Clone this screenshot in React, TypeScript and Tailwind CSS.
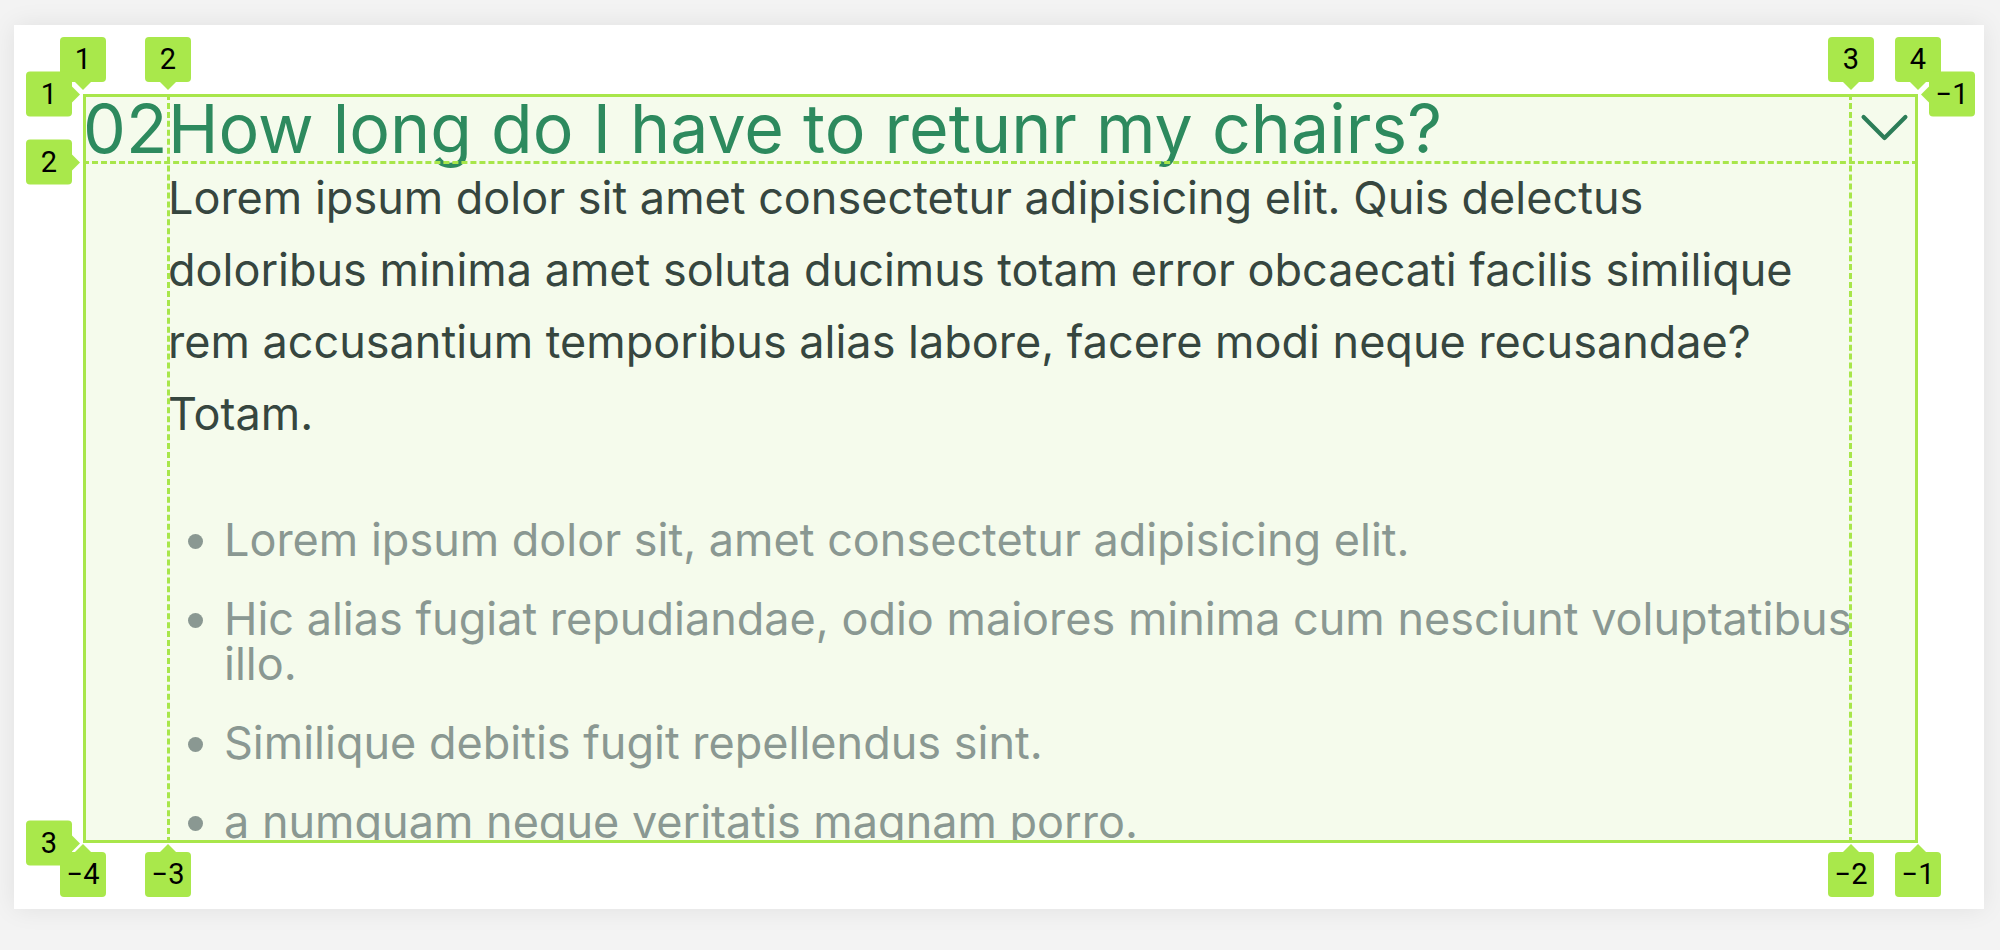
import React from 'react';

type Side = 'top' | 'bottom' | 'left' | 'right';

// grid-line number badge, like the devtools overlay
function LineLabel({ text, side }: { text: string; side: Side }) {
  return (
    <div className="relative flex h-[45px] w-[46px] items-center justify-center rounded-[4px] bg-[#a9e84b] text-[29px] leading-none text-black"
      style={{ fontFamily: 'Roboto, "Liberation Sans", sans-serif' }}>
      {text}
      {side === 'top' && (
        <span className="absolute -bottom-[8px] left-1/2 -translate-x-1/2 border-x-[8px] border-t-[8px] border-x-transparent border-t-[#a9e84b]" />
      )}
      {side === 'bottom' && (
        <span className="absolute -top-[8px] left-1/2 -translate-x-1/2 border-x-[8px] border-b-[8px] border-x-transparent border-b-[#a9e84b]" />
      )}
      {side === 'left' && (
        <span className="absolute -right-[8px] top-1/2 -translate-y-1/2 border-y-[8px] border-l-[8px] border-y-transparent border-l-[#a9e84b]" />
      )}
      {side === 'right' && (
        <span className="absolute -left-[8px] top-1/2 -translate-y-1/2 border-y-[8px] border-r-[8px] border-y-transparent border-r-[#a9e84b]" />
      )}
    </div>
  );
}

const items = [
  'Lorem ipsum dolor sit, amet consectetur adipisicing elit.',
  'Hic alias fugiat repudiandae, odio maiores minima cum nesciunt voluptatibus illo.',
  'Similique debitis fugit repellendus sint.',
  'a numquam neque veritatis magnam porro.',
];

export default function App() {
  return (
    <div className="min-h-[950px] w-full bg-[#f3f3f3] pt-[25px] pl-[14px]" style={{ fontFamily: 'Inter, "Noto Sans", sans-serif' }}>
      <div className="w-[1970px] h-[884px] bg-white pl-[69px] pr-[66px] pt-[69px] shadow-[0_0_24px_rgba(0,0,0,0.08)]">
        <div className="relative grid h-[749px] grid-cols-[85px_1fr_67px] grid-rows-[68px_1fr] bg-[#f5fbec]">
          <p className="text-[68px] leading-none text-[#2d8a5e] whitespace-nowrap">02</p>
          <p className="text-[68px] leading-none text-[#2d8a5e] whitespace-nowrap">How long do I have to retunr my chairs?</p>
          <svg viewBox="0 0 24 24" fill="none" stroke="#2c7d58" strokeWidth={1.5} className="h-[67px] w-[67px]">
            <path strokeLinecap="round" strokeLinejoin="round" d="m19.5 8.25-7.5 7.5-7.5-7.5" />
          </svg>

          <div className="col-start-2 min-h-0 overflow-hidden">
            <p className="text-[45px] leading-[72px] text-[#36463f]">
              Lorem ipsum dolor sit amet consectetur adipisicing elit. Quis delectus doloribus minima amet soluta ducimus totam error obcaecati facilis similique rem accusantium temporibus alias labore, facere modi neque recusandae? Totam.
            </p>
            <ul className="mt-[67px] -mr-[14px] list-disc pl-[56px] flex flex-col gap-[34px] text-[45px] leading-[45px] text-[#8a9892] marker:text-[#8a9892]">
              {items.map((t) => (
                <li key={t}>{t}</li>
              ))}
            </ul>
          </div>

          {/* grid overlay lines */}
          <div className="pointer-events-none absolute inset-0 z-10 border-[3px] border-[#a8e64a]" />
          <div className="pointer-events-none absolute top-0 bottom-0 left-[84px] z-10 border-l-[3px] border-dashed border-[#a8e64a]" />
          <div className="pointer-events-none absolute top-0 bottom-0 right-[66px] z-10 border-l-[3px] border-dashed border-[#a8e64a]" />
          <div className="pointer-events-none absolute top-[67px] left-0 right-0 z-10 border-t-[3px] border-dashed border-[#a8e64a]" />

          {/* column numbers, top and bottom */}
          <div className="absolute -top-[57px] left-0 right-0 z-20 grid grid-cols-[85px_1fr_67px_0px]">
            {['1', '2', '3', '4'].map((n) => (
              <div key={n} className="-translate-x-1/2 w-fit"><LineLabel text={n} side="top" /></div>
            ))}
          </div>
          <div className="absolute -bottom-[54px] left-0 right-0 z-20 grid grid-cols-[85px_1fr_67px_0px]">
            {['−4', '−3', '−2', '−1'].map((n) => (
              <div key={n} className="-translate-x-1/2 w-fit"><LineLabel text={n} side="bottom" /></div>
            ))}
          </div>

          {/* row numbers */}
          <div className="absolute top-0 bottom-0 -left-[57px] z-30 grid grid-rows-[68px_1fr_0px]">
            {['1', '2', '3'].map((n) => (
              <div key={n} className="-translate-y-1/2 h-fit"><LineLabel text={n} side="left" /></div>
            ))}
          </div>
          <div className="absolute top-0 -right-[57px] z-30 -translate-y-1/2">
            <LineLabel text="−1" side="right" />
          </div>
        </div>
      </div>
    </div>
  );
}
